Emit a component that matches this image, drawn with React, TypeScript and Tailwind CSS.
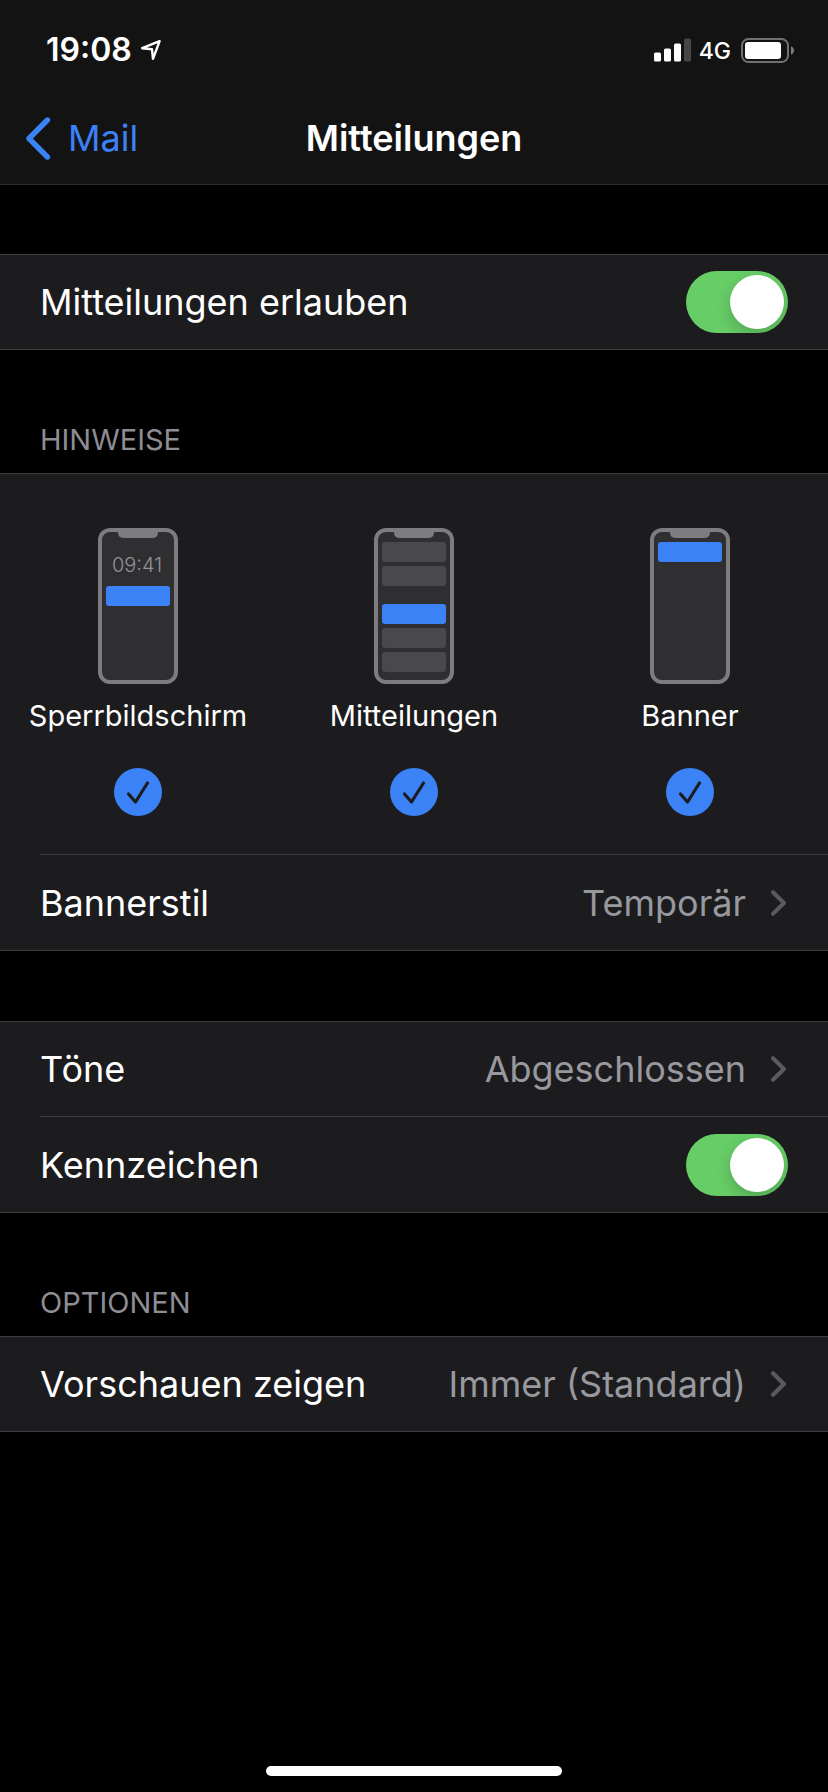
import { useId, type ReactNode } from "react";

function Toggle({ id }: { id: string }) {
  return (
    <input
      id={id}
      type="checkbox"
      role="switch"
      defaultChecked
      className="h-[62px] w-[102px] shrink-0 cursor-pointer appearance-none overflow-hidden rounded-full bg-[#39393d] p-1 before:block before:size-[54px] before:rounded-full before:bg-white before:shadow-[0_6px_16px_rgba(0,0,0,0.2)] checked:bg-[#67ce67] checked:before:ml-10"
    />
  );
}

function Chevron() {
  return (
    <svg viewBox="0 0 18 28" className="h-7 w-[18px] shrink-0" fill="none" aria-hidden="true">
      <path d="M3 3.2 14 14 3 24.8" stroke="#5b5b5f" strokeWidth="4" strokeLinecap="round" strokeLinejoin="round" />
    </svg>
  );
}

function ToggleRow({ label, divided }: { label: string; divided?: boolean }) {
  const id = useId();
  return (
    <div className={divided ? "ml-10 flex h-24 items-center border-t border-[#3d3d40] pr-10" : "ml-10 flex h-[94px] items-center pr-10"}>
      <label htmlFor={id} className="grow">{label}</label>
      <Toggle id={id} />
    </div>
  );
}

function LinkRow({ label, value, divided }: { label: string; value: string; divided?: boolean }) {
  return (
    <a
      href="#"
      className={divided ? "ml-10 flex h-24 items-center border-t border-[#3d3d40] pr-10" : "ml-10 flex h-[94px] items-center pr-10"}
    >
      <span className="grow">{label}</span>
      <span className="mr-6 text-[#98989f]">{value}</span>
      <Chevron />
    </a>
  );
}

function Group({ title, children }: { title?: string; children: ReactNode }) {
  return (
    <section>
      {title && (
        <h2 className="flex h-[123px] items-end px-10 pb-[15px] text-[29px] leading-9 text-[#8d8d93]">{title}</h2>
      )}
      <div className="border-y border-[#3d3d40] bg-[#1c1c1e]">{children}</div>
    </section>
  );
}

type Block = { y: number; active?: boolean };

function Phone({ blocks, time }: { blocks: Block[]; time?: string }) {
  return (
    <svg viewBox="0 0 80 156" className="h-[156px] w-20" aria-hidden="true">
      <rect x="2" y="2" width="76" height="152" rx="10" fill="#2f2f31" stroke="#7d7d81" strokeWidth="4" />
      <path d="M20 3h40v2a5 5 0 0 1-5 5H25a5 5 0 0 1-5-5z" fill="#7d7d81" />
      {time && (
        <text x="39" y="44" textAnchor="middle" fontSize="20" fontWeight="300" fill="#929296">{time}</text>
      )}
      {blocks.map((b) => (
        <rect key={b.y} x="8" y={b.y} width="64" height="20" rx="3" fill={b.active ? "#3b82f7" : "#49494d"} />
      ))}
    </svg>
  );
}

function AlertOption({ label, children }: { label: string; children: ReactNode }) {
  return (
    <label className="flex cursor-pointer flex-col items-center">
      {children}
      <span className="mt-3 text-[29px] leading-10">{label}</span>
      <span className="mt-8 grid size-12">
        <input
          type="checkbox"
          defaultChecked
          className="peer col-start-1 row-start-1 size-12 appearance-none rounded-full border-2 border-[#5b5b5f] checked:border-0 checked:bg-[#3b82f7]"
        />
        <svg viewBox="0 0 48 48" className="pointer-events-none invisible col-start-1 row-start-1 size-12 peer-checked:visible" fill="none" aria-hidden="true">
          <path d="M14.5 26 21.5 34 33.5 15" stroke="#1c1c1e" strokeWidth="3.2" strokeLinecap="round" strokeLinejoin="round" />
        </svg>
      </span>
    </label>
  );
}

function StatusBar() {
  return (
    <div className="flex h-[92px] items-center justify-between pt-2 pr-[34px] pl-[46px]">
      <div className="flex items-center gap-2">
        <span className="text-[32px] leading-10 font-semibold">19:08</span>
        <svg viewBox="0 0 22 22" className="size-[22px]" fill="none" aria-hidden="true">
          <path d="M19.6 2.2 2.2 9.2 12 10.3 13 19.8z" stroke="#fff" strokeWidth="2.4" strokeLinejoin="round" />
        </svg>
      </div>
      <div className="flex items-center">
        <svg viewBox="0 0 37 24" className="h-6 w-[37px]" fill="#fff" aria-hidden="true">
          <rect x="0" y="14.5" width="7" height="9" rx="1.6" />
          <rect x="10" y="10.5" width="7" height="13" rx="1.6" />
          <rect x="20" y="5.5" width="7" height="18" rx="1.6" />
          <rect x="30" y="0.5" width="7" height="23" rx="1.6" fill="#464646" />
        </svg>
        <span className="ml-2 pt-0.5 text-[23px] leading-8 font-medium">4G</span>
        <svg viewBox="0 0 53 25" className="ml-2.5 h-[25px] w-[53px]" aria-hidden="true">
          <rect x="1" y="1" width="46" height="23" rx="6.5" fill="none" stroke="#717171" strokeWidth="2" />
          <rect x="4" y="4" width="36" height="17" rx="3" fill="#fff" />
          <path d="M50 8.2c4 1.6 4 7 0 8.6z" fill="#7c7c7c" />
        </svg>
      </div>
    </div>
  );
}

export default function App() {
  return (
    <div className="flex min-h-screen flex-col bg-black font-['Inter',sans-serif] text-[36px] leading-11 text-white">
      <header className="border-b border-[#2a2a2a] bg-[#131313]">
        <StatusBar />
        <nav className="grid h-[92px] grid-cols-[1fr_auto_1fr] items-center px-6">
          <a href="#" className="flex items-center gap-4 text-[#3b82f7]">
            <svg viewBox="0 0 28 44" className="h-11 w-7" fill="none" aria-hidden="true">
              <path d="M23.4 4 5 22.5 23.4 41" stroke="#3b82f7" strokeWidth="5.4" strokeLinecap="round" strokeLinejoin="round" />
            </svg>
            Mail
          </a>
          <h1 className="font-semibold">Mitteilungen</h1>
        </nav>
      </header>

      <main className="pt-[69px]">
        <Group>
          <ToggleRow label="Mitteilungen erlauben" />
        </Group>

        <Group title="HINWEISE">
          <div className="grid grid-cols-3 pt-[54px] pb-[38px]">
            <AlertOption label="Sperrbildschirm">
              <Phone time="09:41" blocks={[{ y: 58, active: true }]} />
            </AlertOption>
            <AlertOption label="Mitteilungen">
              <Phone blocks={[{ y: 14 }, { y: 38 }, { y: 76, active: true }, { y: 100 }, { y: 124 }]} />
            </AlertOption>
            <AlertOption label="Banner">
              <Phone blocks={[{ y: 14, active: true }]} />
            </AlertOption>
          </div>
          <LinkRow label="Bannerstil" value="Temporär" divided />
        </Group>

        <div className="pt-[70px]">
          <Group>
            <LinkRow label="Töne" value="Abgeschlossen" />
            <ToggleRow label="Kennzeichen" divided />
          </Group>
        </div>

        <Group title="OPTIONEN">
          <LinkRow label="Vorschauen zeigen" value="Immer (Standard)" />
        </Group>
      </main>

      <div className="mx-auto mt-auto mb-4 h-2.5 w-[296px] rounded-full bg-white" />
    </div>
  );
}
